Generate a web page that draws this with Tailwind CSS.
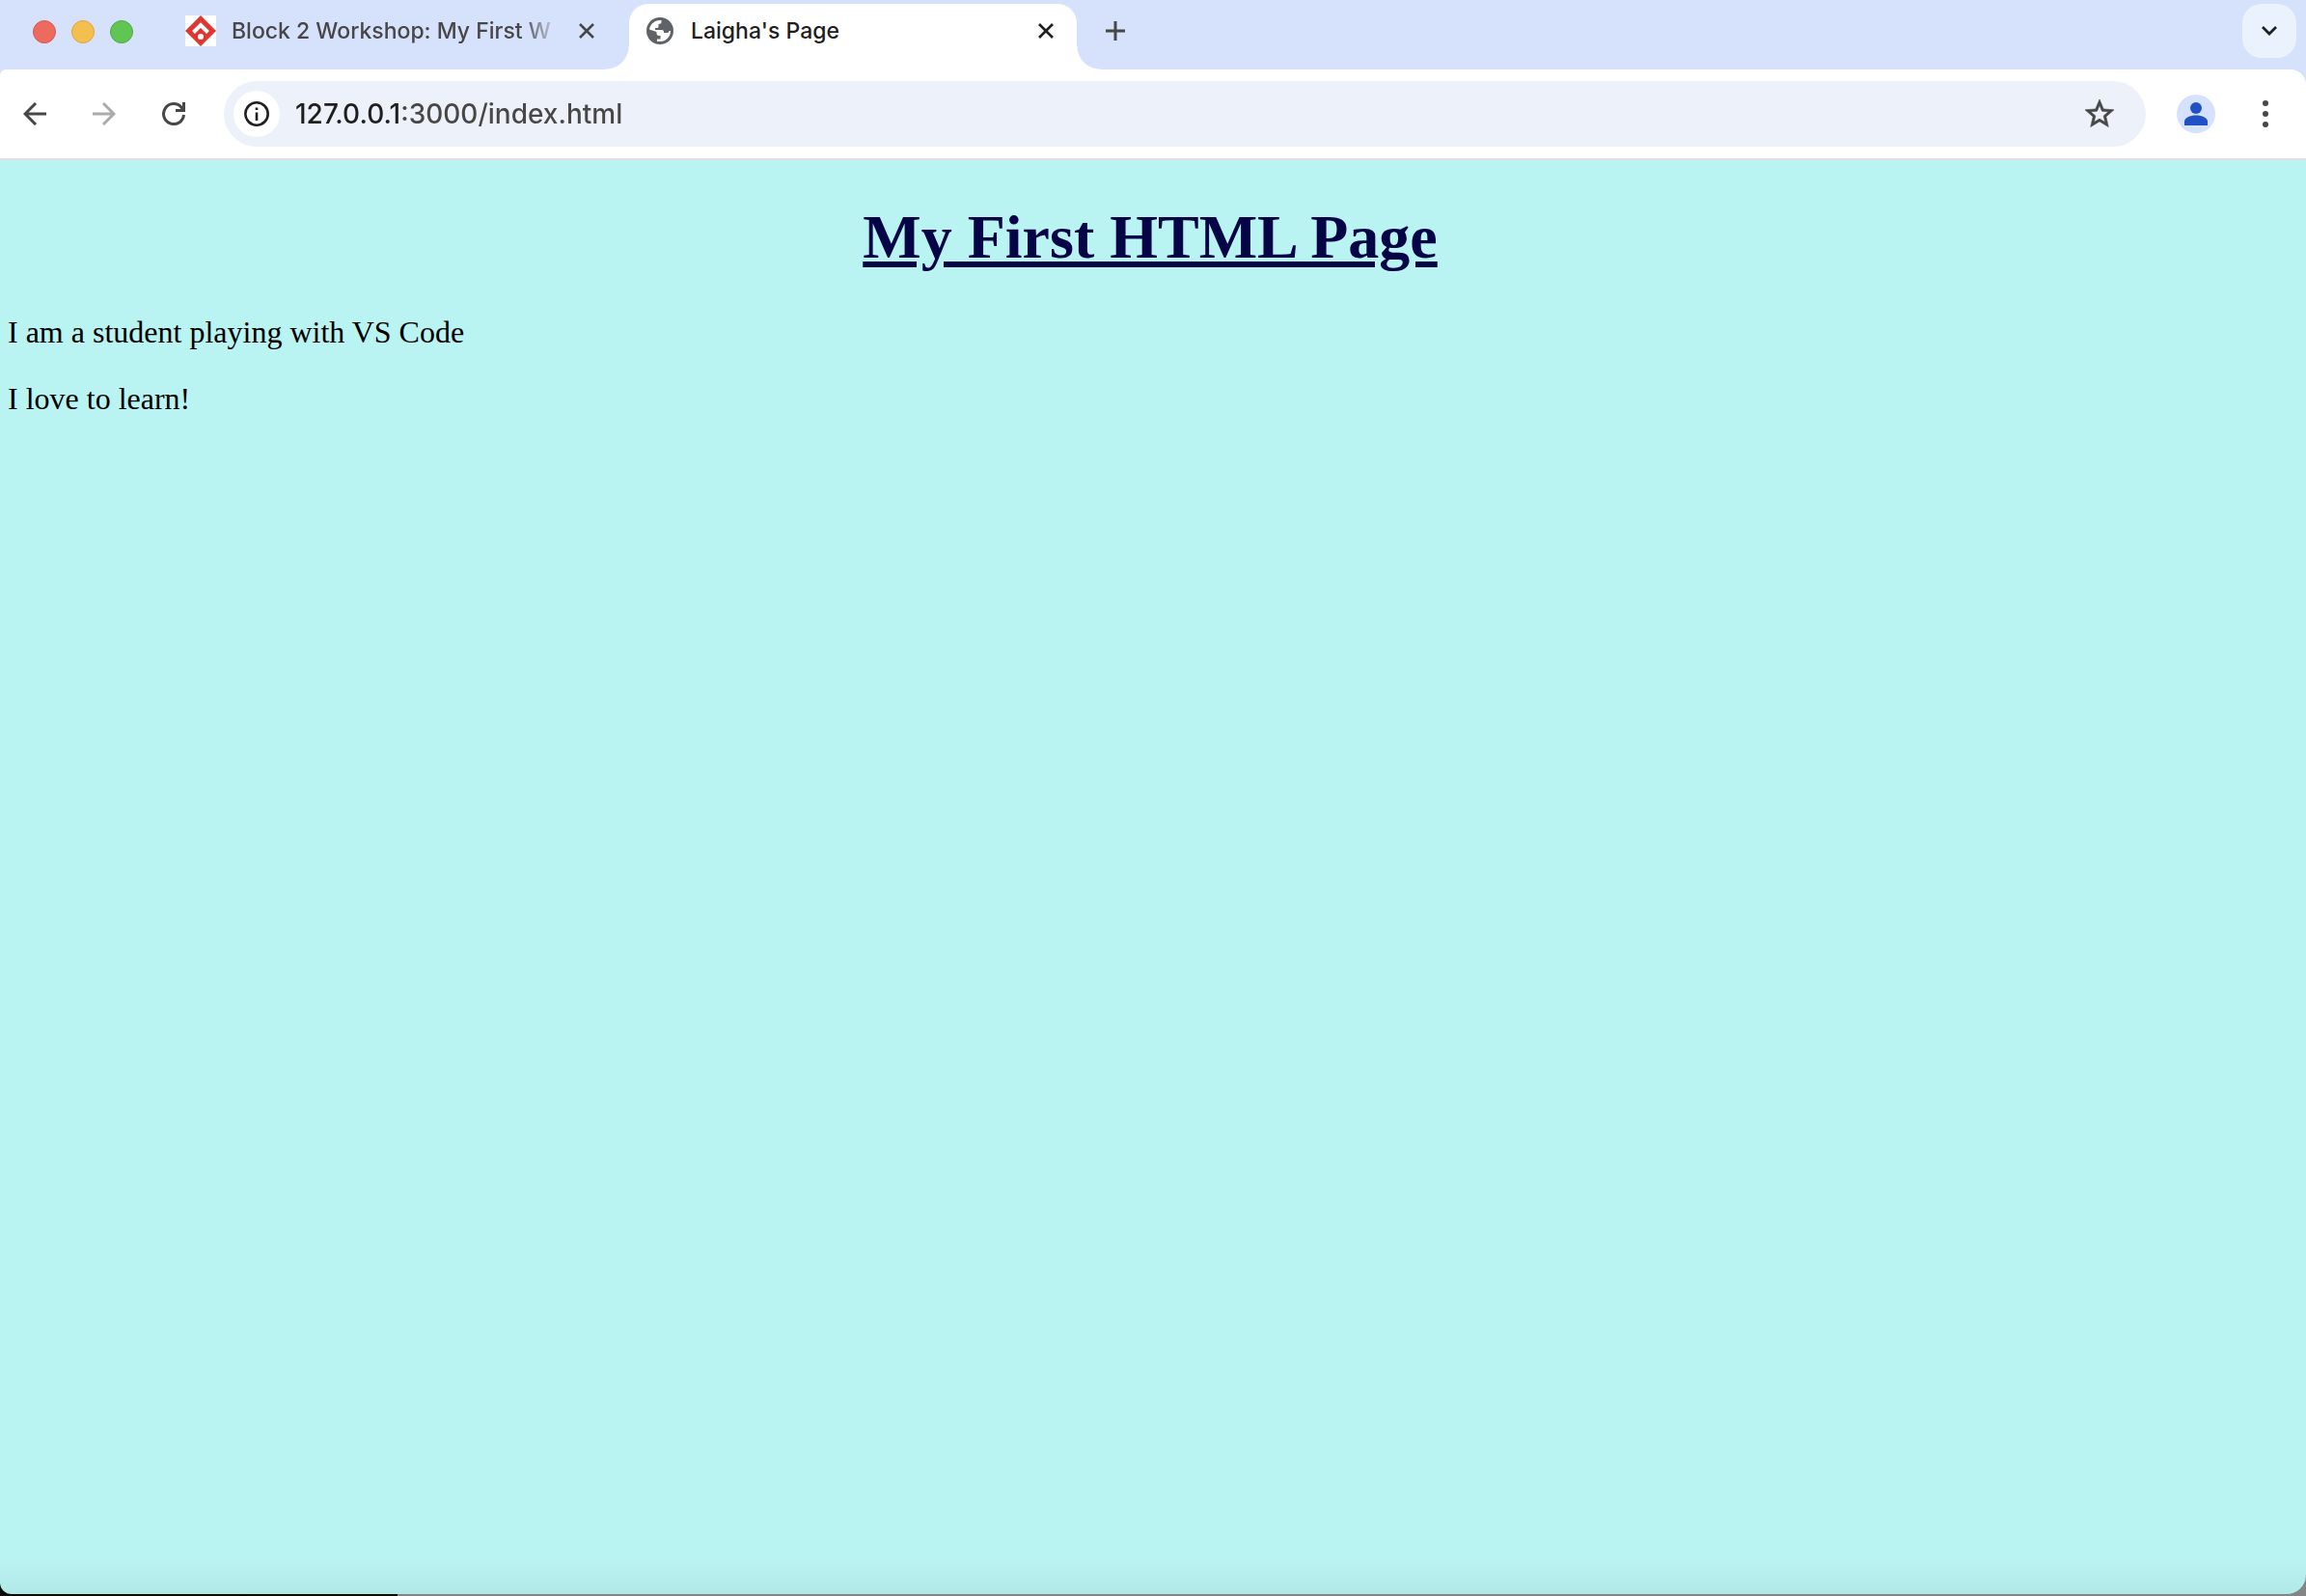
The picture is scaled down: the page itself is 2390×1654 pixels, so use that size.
<!DOCTYPE html>
<html lang="en">
<head>
<meta charset="utf-8">
<title>Laigha's Page</title>
<script src="https://cdn.jsdelivr.net/npm/@tailwindcss/browser@4"></script>
</head>
<body class="bg-[linear-gradient(90deg,#0b0b05_412px,#858585_412px)]">
<div class="flex h-screen flex-col pb-[2px]">
  <header class="bg-[#d6e1fc] font-[Inter,sans-serif]">
    <div class="flex h-[72px] items-start">
      <div class="flex gap-4 pt-[21px] pl-[34px]">
        <button aria-label="Close window" class="size-6 rounded-full border border-[#d9574c] bg-[#ec6a5e]"></button>
        <button aria-label="Minimize window" class="size-6 rounded-full border border-[#dfa53e] bg-[#f4bf4f]"></button>
        <button aria-label="Zoom window" class="size-6 rounded-full border border-[#4dab3d] bg-[#61c554]"></button>
      </div>
      <div class="flex h-full pt-1 pl-[34px]">
        <div class="flex h-14 w-[480px] items-center pr-7 pl-5">
          <button class="flex min-w-0 flex-1 items-center gap-4 text-[#474747]">
            <svg class="size-8 shrink-0" viewBox="0 0 32 32"><path fill="#fff" d="M0 0h32v32H0z"/><path fill="#dc3832" d="M16 0l16 16-16 16L0 16z"/><path d="M8.500 17.500L16 10l7.500 7.500" fill="none" stroke="#fff" stroke-width="4"/><circle cx="16" cy="22" r="3" fill="#fff"/></svg>
            <span class="min-w-0 flex-1 text-left text-[23px] leading-8 font-medium whitespace-nowrap mask-r-from-[300px] mask-r-to-[340px]">Block 2 Workshop: My First W</span>
          </button>
          <button aria-label="Close tab" class="ml-4 grid size-8 place-items-center text-[#474747]"><svg class="size-4" viewBox="0 0 16 16" fill="none" stroke="currentColor" stroke-width="2.600"><path d="M1 1l14 14M15 1L1 15"/></svg></button>
        </div>
        <div class="relative flex h-[68px] w-[464px] items-start rounded-t-[20px] bg-white pt-3 pr-4 pl-[18px]">
          <span class="absolute bottom-0 -left-6 size-6 bg-[radial-gradient(circle_at_0_0,transparent_23px,white_24px)]"></span>
          <span class="absolute -right-6 bottom-0 size-6 bg-[radial-gradient(circle_at_100%_0,transparent_23px,white_24px)]"></span>
          <button class="flex flex-1 items-center gap-[18px] text-[#1f1f1f]">
            <svg class="size-7 shrink-0" viewBox="0 0 28 28"><circle cx="14" cy="14" r="14" fill="#5f6368"/><path fill="#fff" d="M3 12.500C3.700 7.500 8 3 14 3h1.500v1.500c0 1.700-1 2.500-3 2.500v2.500c0 1-1 1.500-2 1.500H9v2h7c1.500 0 2 1 2 2v1h3.500c1 0 2-.8 2-2H25c0 6-4.500 11-11 11h-3v-2.500h3.500V19H13c-1.500 0-2.500-1-2.500-2.500V15z"/></svg>
            <span class="text-[23px] leading-8 font-medium whitespace-nowrap">Laigha's Page</span>
          </button>
          <button aria-label="Close tab" class="grid size-8 place-items-center text-[#1f1f1f]"><svg class="size-4" viewBox="0 0 16 16" fill="none" stroke="currentColor" stroke-width="2.600"><path d="M1 1l14 14M15 1L1 15"/></svg></button>
        </div>
        <button aria-label="New tab" class="ml-3 grid size-14 place-items-center text-[#474747]"><svg class="size-5" viewBox="0 0 20 20" fill="none" stroke="currentColor" stroke-width="3"><path d="M10 0v20M0 10h20"/></svg></button>
      </div>
      <button aria-label="Search tabs" class="mt-1 mr-[10px] ml-auto grid size-14 place-items-center rounded-[20px] bg-[#eaf2fd] text-[#1f1f1f]"><svg class="h-[10px] w-4" viewBox="0 0 16 10" fill="none" stroke="currentColor" stroke-width="2.800"><path d="M1 1l7 7 7-7"/></svg></button>
    </div>
    <div class="flex h-[94px] items-center rounded-tl-[6px] rounded-tr-2xl border-b-2 border-[#e0e0e1] bg-white pr-[6px]">
      <button aria-label="Back" class="grid h-14 w-[72px] place-items-center text-[#474747]"><svg class="size-6" viewBox="0 0 24 24" fill="none" stroke="currentColor" stroke-width="3"><path d="M24 12H2M13 1L2 12l11 11"/></svg></button>
      <button aria-label="Forward" disabled class="grid h-14 w-[72px] place-items-center text-[#ababab]"><svg class="size-6" viewBox="0 0 24 24" fill="none" stroke="currentColor" stroke-width="3"><path d="M0 12h22M11 1l11 11-11 11"/></svg></button>
      <button aria-label="Reload" class="grid h-14 w-[72px] place-items-center text-[#474747]"><svg class="size-6" viewBox="0 0 24 24" fill="none" stroke="currentColor" stroke-width="3"><path d="M22.500 13A10.500 10.500 0 1 1 20 5.200L22 8M22.500 0v8.500H14"/></svg></button>
      <div class="ml-4 flex h-[68px] flex-1 items-center rounded-full bg-[#edf1f9] pr-5 pl-[10px]">
        <button aria-label="View site information" class="grid size-12 place-items-center rounded-full bg-white text-[#1f1f1f]"><svg class="size-[26px]" viewBox="0 0 26 26" fill="none" stroke="currentColor"><circle cx="13" cy="13" r="11.700" stroke-width="2.600"/><path d="M13 11.500V20M13 6.500V9" stroke-width="2.600"/></svg></button>
        <input aria-label="Address" value="127.0.0.1:3000/index.html" class="ml-4 h-12 min-w-0 flex-1 bg-[linear-gradient(90deg,#1f1f1f_112px,#474747_112px)] bg-clip-text text-[28px] font-medium text-transparent outline-none">
        <button aria-label="Bookmark this tab" class="grid size-14 place-items-center text-[#474747]"><svg class="size-9" viewBox="0 0 24 24" fill="currentColor" stroke="currentColor" stroke-width=".4"><path d="M22 9.240l-7.190-.62L12 2 9.190 8.630 2 9.240l5.460 4.730L5.820 21 12 17.270 18.180 21l-1.630-7.030L22 9.240zM12 15.400l-3.760 2.270 1-4.280-3.320-2.880 4.380-.38L12 6.100l1.710 4.040 4.380.38-3.320 2.880 1 4.280L12 15.400z"/></svg></button>
      </div>
      <button aria-label="Profile" class="ml-8 grid size-10 place-items-center rounded-full bg-[#d6e1fc] text-[#2152c4]"><svg class="size-6" viewBox="0 0 24 24" fill="currentColor"><circle cx="12" cy="6" r="6"/><path d="M0 24v-4c0-4 6-6.500 12-6.500s12 2.500 12 6.500v4z"/></svg></button>
      <button aria-label="Menu" class="ml-4 grid h-14 w-[72px] place-items-center text-[#474747]"><svg class="h-7 w-[6px]" viewBox="0 0 6 28" fill="currentColor"><circle cx="3" cy="3" r="3"/><circle cx="3" cy="14" r="3"/><circle cx="3" cy="25" r="3"/></svg></button>
    </div>
  </header>
  <main class="flex flex-1 flex-col rounded-br-[20px] rounded-bl-[12px] bg-[#b9f4f2] bg-[linear-gradient(0deg,#b2e9e8,#b9f4f2_40px)] pt-[43px] pr-[14px] pl-2 font-['Liberation_Serif',serif] text-[32px] leading-[37px] text-black">
    <h1 class="mb-[43px] text-center text-[64px] leading-[74px] font-bold text-[#040447] underline">My First HTML Page</h1>
    <p class="mb-8">I am a student playing with VS Code</p>
    <p>I love to learn!</p>
  </main>
</div>
</body>
</html>
